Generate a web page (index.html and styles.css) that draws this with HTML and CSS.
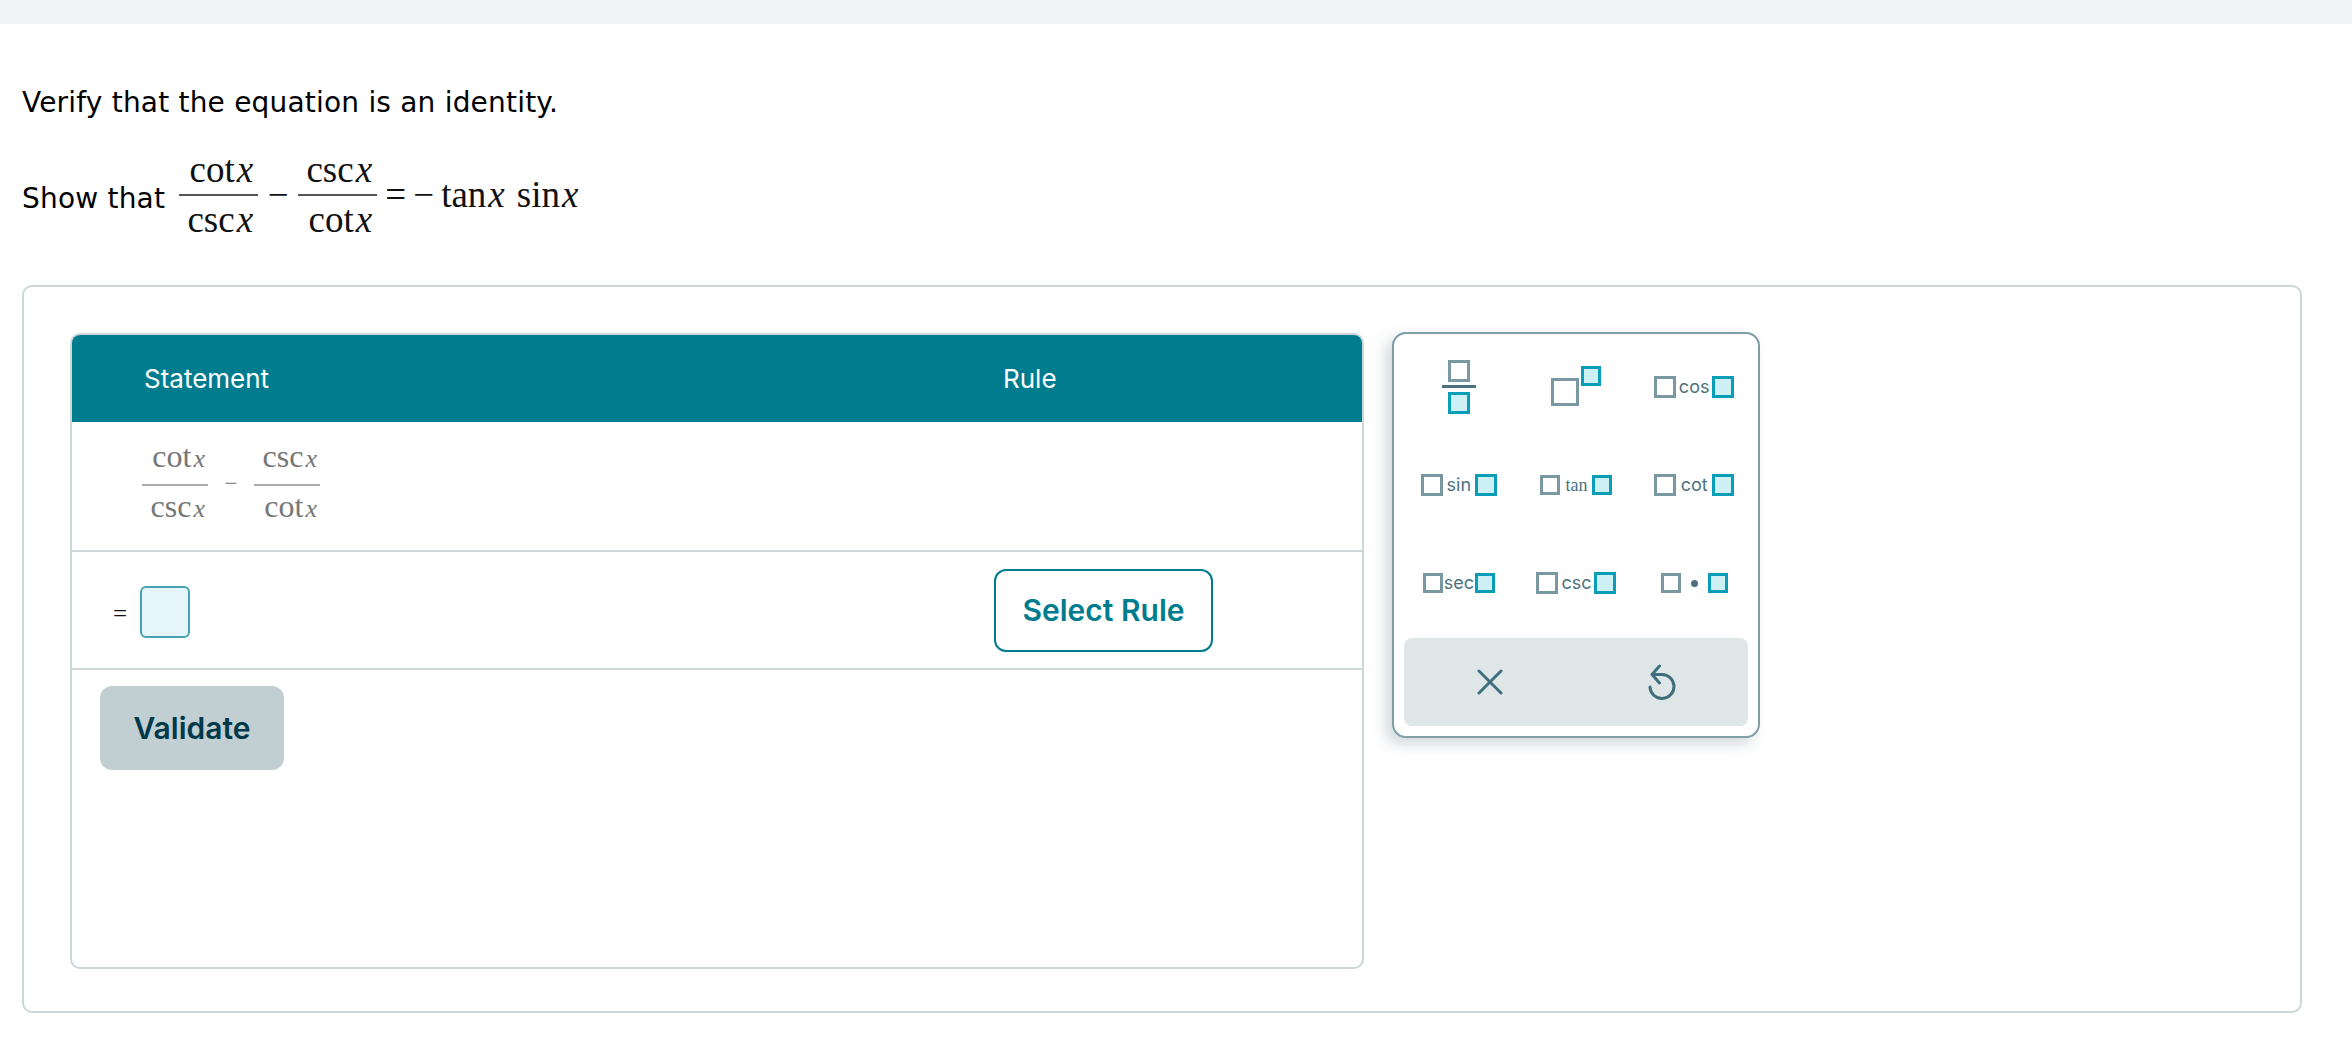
FILE: index.html
```html
<!DOCTYPE html>
<html lang="en">
<head>
<meta charset="utf-8">
<title>Verify identity</title>
<link rel="stylesheet" href="styles.css">
</head>
<body>
<div class="topbar"></div>
<main class="page">
  <p class="prompt">Verify that the equation is an identity.</p>
  <div class="show">
    <span class="show-label">Show that</span>
    <span class="math">
      <span class="frac"><span class="num">cot<i>x</i></span><span class="den">csc<i>x</i></span></span>
      <span class="minus">−</span>
      <span class="frac"><span class="num">csc<i>x</i></span><span class="den">cot<i>x</i></span></span>
      <span class="eq">=</span>
      <span class="minus2">−</span>
      <span class="term">tan<i>x</i></span>
      <span class="term second">sin<i>x</i></span>
    </span>
  </div>
  <section class="card">
    <div class="proof">
      <div class="proof-head">
        <div class="col-statement">Statement</div>
        <div class="col-rule">Rule</div>
      </div>
      <div class="proof-row first">
        <div class="col-statement">
          <span class="math small">
            <span class="frac"><span class="num">cot<i>x</i></span><span class="den">csc<i>x</i></span></span>
            <span class="minus">−</span>
            <span class="frac"><span class="num">csc<i>x</i></span><span class="den">cot<i>x</i></span></span>
          </span>
        </div>
      </div>
      <div class="proof-row second-row">
        <div class="col-eq">
          <span class="eq-sign">=</span>
          <span class="answer"></span>
        </div>
        <div class="col-select"><button class="select-rule" type="button">Select Rule</button></div>
      </div>
      <div class="proof-foot"><button class="validate" type="button">Validate</button></div>
    </div>
    <aside class="palette">
      <div class="keys">
        <div class="key"><span class="stack"><span class="box"></span><span class="bar"></span><span class="box fill"></span></span></div>
        <div class="key pow"><span class="box big"></span><span class="box fill sup"></span></div>
        <div class="key"><span class="box"></span><span class="fn fn-cos">cos</span><span class="box fill"></span></div>
        <div class="key"><span class="box"></span><span class="fn fn-sin">sin</span><span class="box fill"></span></div>
        <div class="key"><span class="box sm"></span><span class="fn fn-tan">tan</span><span class="box fill sm"></span></div>
        <div class="key"><span class="box"></span><span class="fn fn-cot">cot</span><span class="box fill"></span></div>
        <div class="key"><span class="box sm"></span><span class="fn fn-sec">sec</span><span class="box fill sm"></span></div>
        <div class="key"><span class="box"></span><span class="fn fn-csc">csc</span><span class="box fill"></span></div>
        <div class="key dotkey"><span class="box sm"></span><span class="dot"></span><span class="box fill sm"></span></div>
      </div>
      <div class="actions">
        <button class="action" type="button" aria-label="Clear">
          <svg width="26" height="26" viewBox="0 0 26 26"><path d="M2 2 L24 24 M24 2 L2 24" fill="none" stroke="#3f6f7c" stroke-width="3" stroke-linecap="round"/></svg>
        </button>
        <button class="action" type="button" aria-label="Undo">
          <svg width="28" height="36" viewBox="0 0 28 36"><path d="M11.5 2 L4 10.5 L11.5 19 M4 10.5 H14 A12 12 0 1 1 2 23" fill="none" stroke="#3f6f7c" stroke-width="3" stroke-linecap="round" stroke-linejoin="round"/></svg>
        </button>
      </div>
    </aside>
  </section>
</main>
</body>
</html>
```
FILE: styles.css
```css
* { box-sizing: border-box; }
html, body { margin: 0; padding: 0; background: #fff; }
body { height: 1042px; overflow: hidden; font-family: "Inter", "Liberation Sans", sans-serif; color: #000; }
.topbar { height: 24px; background: #f1f3f5; }
.page { padding: 0 22px; }
.prompt { margin: 0; padding-top: 61px; font: 28px/36px "DejaVu Sans", sans-serif; letter-spacing: 0.2px; height: 98px; }
.show { display: flex; align-items: center; height: 163px; padding-bottom: 18px; }
.show-label { font: 28px/36px "DejaVu Sans", sans-serif; letter-spacing: 0.2px; margin: 9px 14px 0 0; }
.math { display: inline-flex; align-items: center; font-family: "Liberation Serif", serif; font-size: 37px; line-height: 40px; color: #111; }
.math i { margin-left: 2px; }
.frac { display: inline-flex; flex-direction: column; align-items: center; width: 79px; }
.num { padding: 0 5px 4px 0; text-align: right; width: 100%; white-space: nowrap; }
.den { border-top: 2px solid #555; width: 100%; padding: 4px 5px 0 0; text-align: right; white-space: nowrap; }
.minus { width: 40px; text-align: center; }
.eq { margin-left: 8px; width: 28px; }
.minus2 { width: 28px; }
.term { white-space: nowrap; }
.term.second { margin-left: 12px; }
.card { display: flex; align-items: flex-start; gap: 28px; width: 2280px; height: 728px; padding: 46px; border: 2px solid #cdd7da; border-radius: 10px; }
.proof { width: 1294px; height: 636px; border: 2px solid #cdd7da; border-radius: 10px; }
.proof-head { display: flex; align-items: center; height: 87px; background: #007c8f; color: #fff; font-size: 26px; border-radius: 8px 8px 0 0; }
.col-statement { width: 924px; padding-left: 72px; }
.col-rule { padding-left: 7px; }
.proof-row { display: flex; border-bottom: 2px solid #cdd7da; }
.proof-row.first { height: 130px; padding-bottom: 7px; align-items: center; }
.proof-row.first .col-statement { width: 100%; padding-left: 70px; }
.proof-row.second-row { height: 118px; align-items: center; }
.math.small { font-size: 32px; line-height: 34px; color: #777; }
.math.small i { font-size: 26px; margin-left: 2px; }
.math.small .frac { width: 66px; }
.math.small .num { padding: 0 3px 8px 0; }
.math.small .den { padding: 3px 3px 0 0; border-top-color: #aaa; }
.math.small .minus { width: 46px; font-size: 24px; }
.col-eq { display: flex; align-items: center; width: 922px; padding-left: 41px; gap: 13px; }
.eq-sign { margin-top: 7px; font: 25px/36px "Liberation Serif", serif; color: #111; }
.answer { width: 50px; height: 52px; margin-top: 4px; background: #e5f5f9; border: 2px solid #45a3b5; border-radius: 6px; }
.select-rule { width: 219px; height: 83px; padding: 0; background: #fff; border: 2px solid #007c8f; border-radius: 12px; color: #007c8f; font: 600 30px "Inter", sans-serif; }
.proof-foot { padding: 16px 0 0 28px; }
.validate { width: 184px; height: 84px; padding: 0; background: #c1ced2; border: 0; border-radius: 12px; color: #00394a; font: 600 30px "Inter", sans-serif; }
.palette { width: 368px; height: 406px; margin-top: -1px; padding: 4px 10px; background: #fff; border: 2px solid #7f9ea6; border-radius: 14px; box-shadow: -6px 6px 14px rgba(70, 100, 110, 0.25); }
.keys { display: grid; grid-template-columns: repeat(3, 1fr); grid-template-rows: repeat(3, 98px); margin: 0 -5px 0 -4px; }
.key { display: flex; align-items: center; justify-content: center; color: #4a7280; }
.box { display: block; flex: none; width: 22px; height: 22px; background: #fff; border: 3px solid #7a98a1; }
.box.fill { background: #ccf0f4; border-color: #0a9db8; }
.box.sm { width: 20px; height: 20px; }
.stack { display: flex; flex-direction: column; align-items: center; }
.bar { width: 34px; height: 3px; margin: 3px 0 4px; background: #4a7280; }
.pow { align-items: flex-start; }
.pow .big { width: 28px; height: 28px; margin-top: 40px; }
.pow .sup { width: 20px; height: 20px; margin: 28px 0 0 2px; }
.fn { font: 18px/22px "Inter", sans-serif; text-align: center; }
.fn-cos, .fn-cot { width: 36px; }
.fn-sin { width: 32px; }
.fn-tan { width: 32px; font: 18px/20px "Liberation Serif", serif; }
.fn-sec { width: 32px; }
.fn-csc { width: 36px; }
.dot { width: 7px; height: 7px; margin: 0 10px; border-radius: 50%; background: #4a7280; }
.actions { display: flex; height: 88px; margin-top: 6px; background: #dfe6e8; border-radius: 8px; }
.action { display: flex; align-items: center; justify-content: center; flex: 1; padding: 0; background: none; border: 0; }
```
